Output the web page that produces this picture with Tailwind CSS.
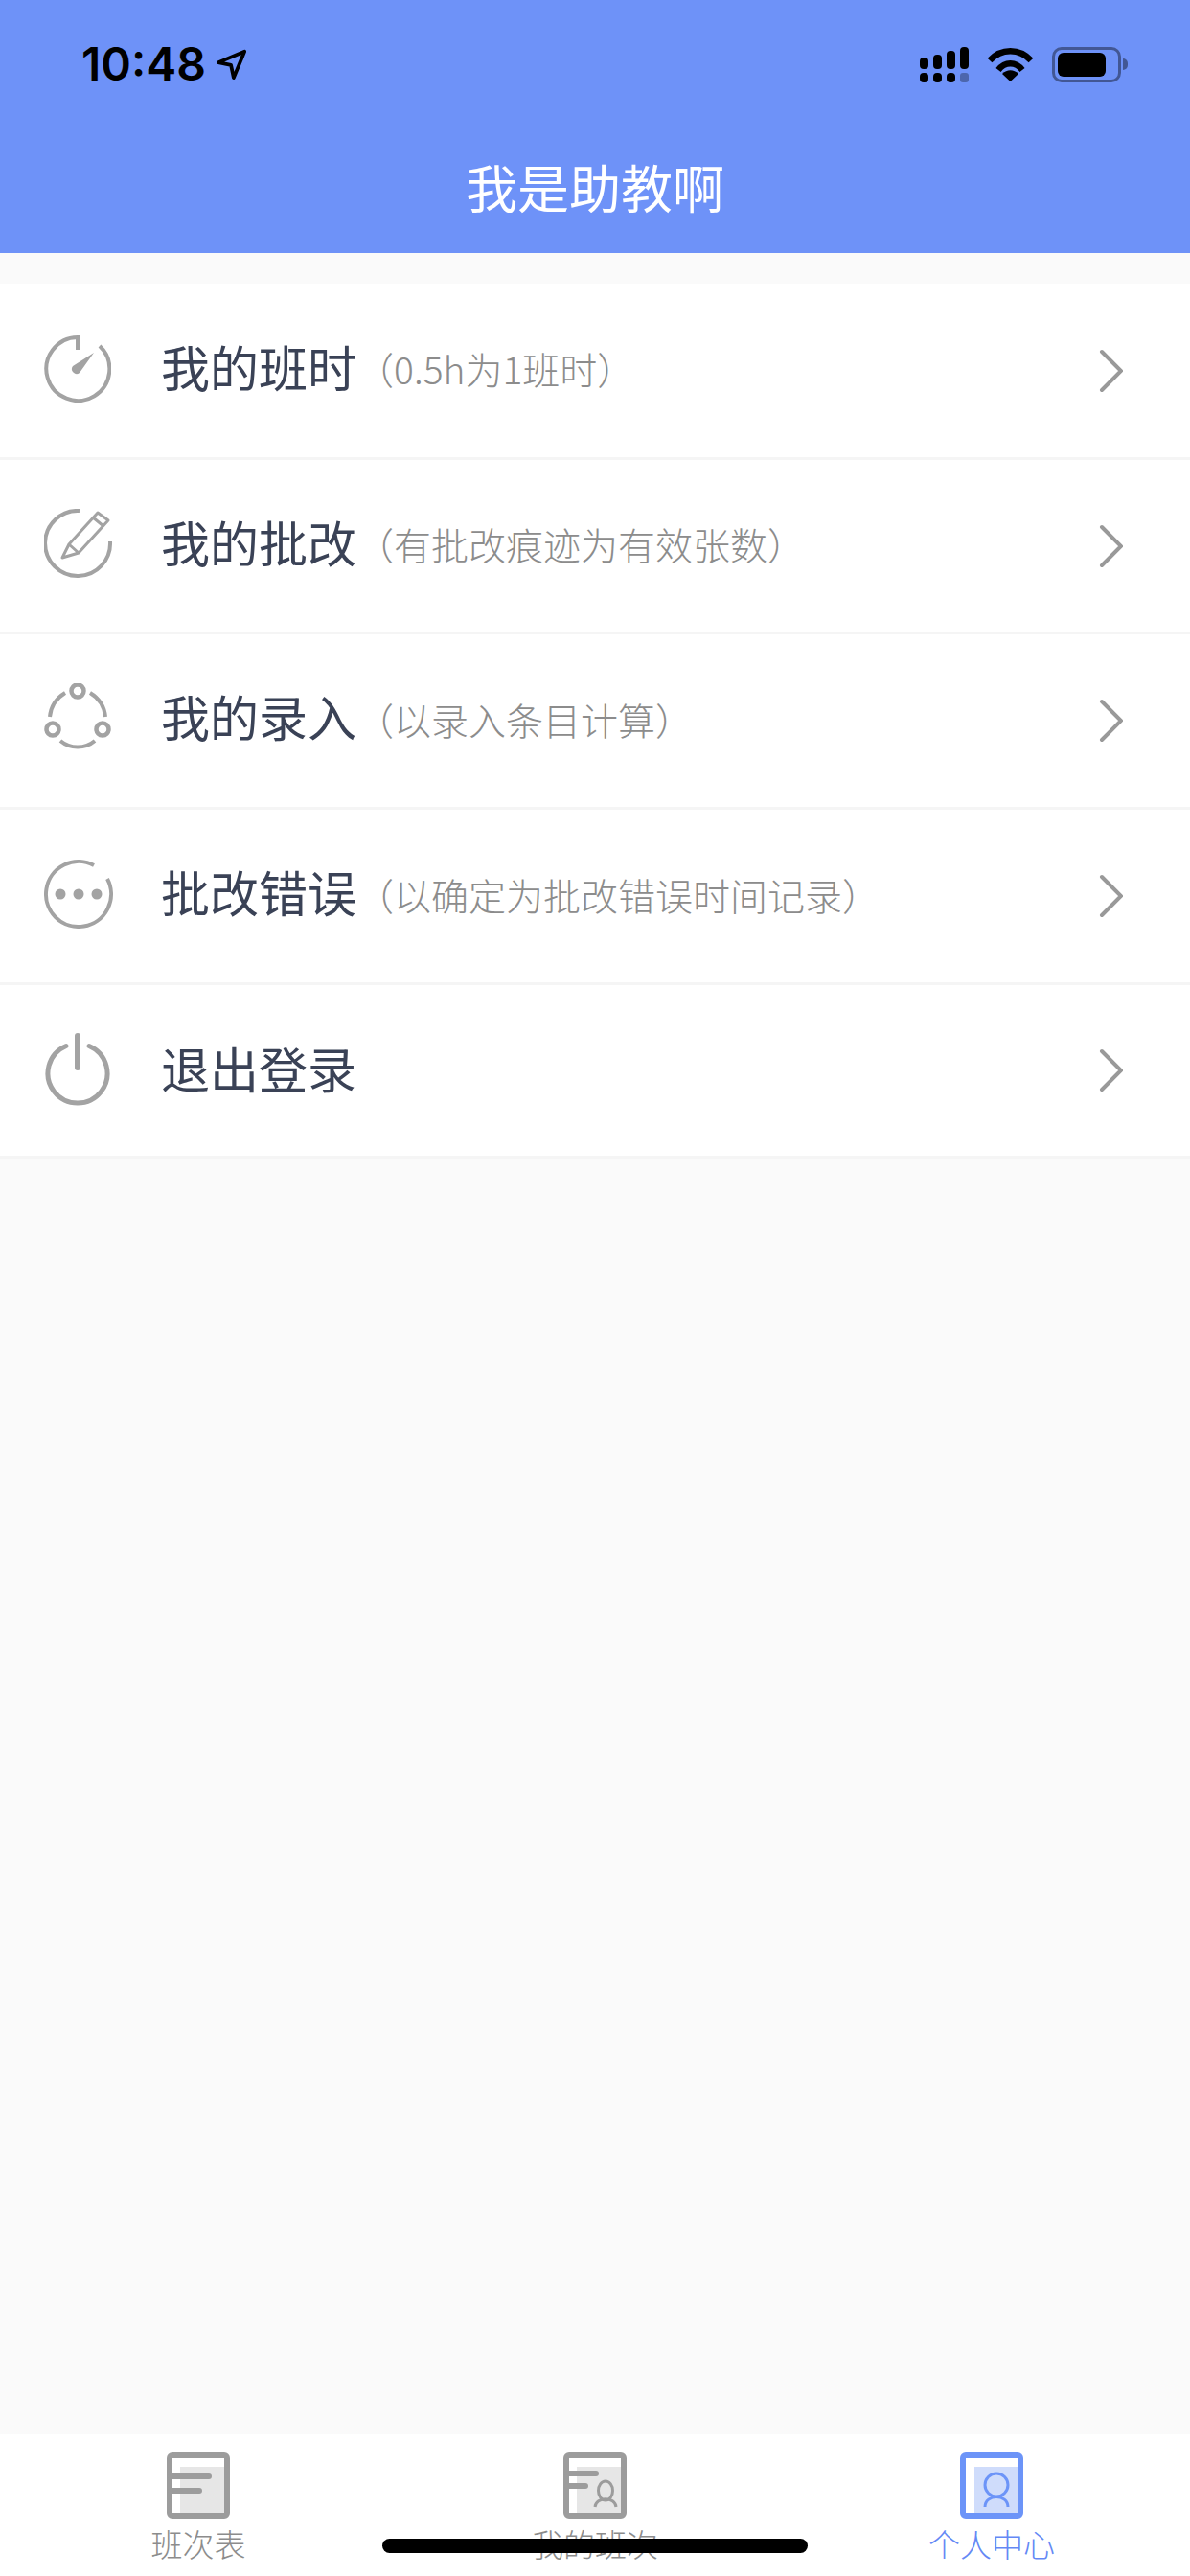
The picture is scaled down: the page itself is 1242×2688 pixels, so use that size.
<!DOCTYPE html>
<html lang="zh">
<head>
<meta charset="utf-8">
<script src="https://cdn.jsdelivr.net/npm/@tailwindcss/browser@4"></script>
</head>
<body class="bg-[#fafafa] font-['Noto_Sans_CJK_SC','Noto_Sans',sans-serif]">
<div class="relative flex flex-col w-[1242px] h-[2688px] overflow-hidden">

  <!-- header -->
  <header class="h-[264px] bg-[#6e92f8] flex flex-col shrink-0">
    <div class="flex justify-between items-center h-[132px] pt-[2px] pl-[85px] pr-[65px]">
      <div class="flex items-center gap-[11px] text-black">
        <span class="font-['Inter',sans-serif] font-semibold text-[48px] leading-none">10:48</span>
        <svg class="w-[32px] h-[32px]" viewBox="0 0 34 34" fill="none" stroke="#000" stroke-width="4" stroke-linejoin="round"><path d="M2 15 L31 3 L19 32 L16 18 Z"/></svg>
      </div>
      <div class="flex items-center gap-[19px]">
        <svg class="w-[51px] h-[37px]" viewBox="0 0 51 37" fill="#000">
          <rect x="0" y="11" width="9" height="12" rx="4"/><rect x="14" y="8" width="9" height="15" rx="4"/><rect x="28" y="4" width="9" height="19" rx="4"/><rect x="42" y="0" width="9" height="23" rx="4"/>
          <rect x="0" y="27" width="9" height="10" rx="4"/><rect x="14" y="27" width="9" height="10" rx="4"/><rect x="28" y="27" width="9" height="10" rx="4"/><rect x="42" y="27" width="9" height="10" rx="3" fill-opacity="0.3"/>
        </svg>
        <svg class="w-[49px] h-[36px]" viewBox="0 0 49 36" fill="none" stroke="#000" stroke-width="6.5">
          <path d="M3 14 C15 1 34 1 46 14"/><path d="M12 24 C19 15 30 15 37 24"/><path d="M16 28 L24.5 36 L33 28 C28 23 21 23 16 28 Z" fill="#000" stroke="none"/>
        </svg>
        <div class="flex items-center">
          <div class="w-[72px] h-[37px] rounded-[10px] border-[3px] border-black/40 p-[3px] flex">
            <div class="w-[50px] h-full bg-black rounded-[6px]"></div>
          </div>
          <div class="w-[5px] h-[12px] ml-[2px] bg-black/40 rounded-r-full"></div>
        </div>
      </div>
    </div>
    <h1 class="text-center text-white text-[54px] leading-[64px] font-normal mt-[31px]">我是助教啊</h1>
  </header>

  <!-- menu -->
  <ul class="mt-[32px] bg-white">
    <li class="h-[184px] flex items-center pl-[46px] pr-[70px] border-b-[3px] border-[#f5f5f5]">
      <svg class="w-[70px] h-[70px] shrink-0 mb-[4px]" viewBox="0 0 70 70" fill="none" stroke="#a3a3a3" stroke-width="4">
        <path d="M35 15 V2 A33 33 0 1 0 58 11"/>
        <path d="M52 18 L30 32 A5 5 0 0 0 37 39 Z" fill="#a3a3a3" stroke="none"/>
      </svg>
      <span class="ml-[52px] text-[51px] leading-none text-[#3a4256] mb-[9px]">我的班时</span>
      <span class="text-[39px] leading-none font-light text-[#8c8c8c] mb-[4px]">（0.5h为1班时）</span>
      <svg class="ml-auto w-[28px] h-[46px]" viewBox="0 0 28 46" fill="none" stroke="#999" stroke-width="4" stroke-linecap="round"><path d="M6 3 L26 23 L6 43"/></svg>
    </li>
    <li class="h-[182px] flex items-center pl-[46px] pr-[70px] border-b-[3px] border-[#f5f5f5]">
      <svg class="w-[72px] h-[72px] shrink-0 mb-[5px]" viewBox="0 0 72 72" fill="none" stroke="#a3a3a3" stroke-width="4">
        <path d="M37 2 A34 34 0 1 0 69 34"/>
        <path d="M26 37 L56 4 L67 12 L36 46 Z M51 9 L62 18 M26 37 L19 51 L36 46" stroke-width="3" stroke-linejoin="round"/>
      </svg>
      <span class="ml-[50px] text-[51px] leading-none text-[#3a4256] mb-[9px]">我的批改</span>
      <span class="text-[39px] leading-none font-light text-[#8c8c8c] mb-[4px]">（有批改痕迹为有效张数）</span>
      <svg class="ml-auto w-[28px] h-[46px]" viewBox="0 0 28 46" fill="none" stroke="#999" stroke-width="4" stroke-linecap="round"><path d="M6 3 L26 23 L6 43"/></svg>
    </li>
    <li class="h-[183px] flex items-center pl-[46px] pr-[70px] border-b-[3px] border-[#f5f5f5]">
      <svg class="w-[70px] h-[70px] shrink-0 mb-[8px]" viewBox="0 0 70 70" fill="none" stroke="#a3a3a3" stroke-width="4">
        <circle cx="35" cy="8" r="6.5" stroke-width="4.5"/><circle cx="9" cy="48" r="6.5" stroke-width="4.5"/><circle cx="61" cy="48" r="6.5" stroke-width="4.5"/>
        <path d="M6 35 A33 33 0 0 1 22 10"/><path d="M48 10 A33 33 0 0 1 64 35"/><path d="M17 60 A28 28 0 0 0 53 60"/>
      </svg>
      <span class="ml-[52px] text-[51px] leading-none text-[#3a4256] mb-[9px]">我的录入</span>
      <span class="text-[39px] leading-none font-light text-[#8c8c8c] mb-[4px]">（以录入条目计算）</span>
      <svg class="ml-auto w-[28px] h-[46px]" viewBox="0 0 28 46" fill="none" stroke="#999" stroke-width="4" stroke-linecap="round"><path d="M6 3 L26 23 L6 43"/></svg>
    </li>
    <li class="h-[183px] flex items-center pl-[46px] pr-[70px] border-b-[3px] border-[#f5f5f5]">
      <svg class="w-[72px] h-[72px] shrink-0 mb-[5px]" viewBox="0 0 72 72" fill="none" stroke="#a3a3a3" stroke-width="4">
        <path d="M52 6 A34 34 0 1 0 66 20"/>
        <circle cx="17" cy="36" r="5.5" fill="#a3a3a3" stroke="none"/><circle cx="36" cy="36" r="5.5" fill="#a3a3a3" stroke="none"/><circle cx="55" cy="36" r="5.5" fill="#a3a3a3" stroke="none"/>
      </svg>
      <span class="ml-[50px] text-[51px] leading-none text-[#3a4256] mb-[9px]">批改错误</span>
      <span class="text-[39px] leading-none font-light text-[#8c8c8c] mb-[4px]">（以确定为批改错误时间记录）</span>
      <svg class="ml-auto w-[28px] h-[46px]" viewBox="0 0 28 46" fill="none" stroke="#999" stroke-width="4" stroke-linecap="round"><path d="M6 3 L26 23 L6 43"/></svg>
    </li>
    <li class="h-[181px] flex items-center pl-[46px] pr-[70px] border-b-[3px] border-[#f5f5f5]">
      <svg class="w-[70px] h-[78px] shrink-0" viewBox="0 0 70 78" fill="none" stroke="#a3a3a3" stroke-width="5">
        <path d="M23 13.5 A31 31 0 1 0 47 13.5" stroke-linecap="round"/>
        <path d="M35 3 V36" stroke-width="6" stroke-linecap="round"/>
      </svg>
      <span class="ml-[52px] text-[51px] leading-none text-[#3a4256] mb-[6px]">退出登录</span>
      <svg class="ml-auto w-[28px] h-[46px]" viewBox="0 0 28 46" fill="none" stroke="#999" stroke-width="4" stroke-linecap="round"><path d="M6 3 L26 23 L6 43"/></svg>
    </li>
  </ul>

  <!-- tab bar -->
  <nav class="mt-auto h-[148px] bg-white grid grid-cols-3 pt-[19px]">
    <div class="flex flex-col items-center">
      <svg class="w-[66px] h-[69px]" viewBox="0 0 66 69">
        <rect x="14" y="15" width="46" height="48" fill="#e6e6e6"/>
        <rect x="3" y="3" width="60" height="63" rx="3" fill="none" stroke="#9c9c9c" stroke-width="6"/>
        <path d="M4 25 H44 M4 40 H34" stroke="#9c9c9c" stroke-width="6" stroke-linecap="round"/>
      </svg>
      <span class="mt-[8px] text-[33px] leading-[36px] font-light text-[#8c8c8c]">班次表</span>
    </div>
    <div class="flex flex-col items-center">
      <svg class="w-[66px] h-[69px]" viewBox="0 0 66 69">
        <rect x="14" y="15" width="46" height="48" fill="#e6e6e6"/>
        <rect x="3" y="3" width="60" height="63" rx="3" fill="none" stroke="#9c9c9c" stroke-width="6"/>
        <path d="M4 22 H34 M4 35 H23" stroke="#9c9c9c" stroke-width="6" stroke-linecap="round"/>
        <ellipse cx="44" cy="40" rx="7.5" ry="10" fill="none" stroke="#9c9c9c" stroke-width="3"/>
        <path d="M33 57 C34 46 54 46 55 57" fill="none" stroke="#9c9c9c" stroke-width="3"/>
      </svg>
      <span class="mt-[8px] text-[33px] leading-[36px] font-light text-[#8c8c8c]">我的班次</span>
    </div>
    <div class="flex flex-col items-center">
      <svg class="w-[66px] h-[69px]" viewBox="0 0 66 69">
        <rect x="15" y="15" width="45" height="48" fill="#cfdcfb"/>
        <rect x="3" y="3" width="60" height="63" rx="3" fill="none" stroke="#6c94f8" stroke-width="6"/>
        <circle cx="38" cy="34" r="12" fill="none" stroke="#6c94f8" stroke-width="3"/>
        <path d="M26 57 C26 43 50 43 50 57" fill="none" stroke="#6c94f8" stroke-width="3"/>
      </svg>
      <span class="mt-[8px] text-[33px] leading-[36px] font-light text-[#6488f5]">个人中心</span>
    </div>
  </nav>

  <!-- home indicator -->
  <div class="absolute left-[399px] top-[2649px] w-[444px] h-[15px] rounded-full bg-black"></div>
</div>
</body>
</html>
